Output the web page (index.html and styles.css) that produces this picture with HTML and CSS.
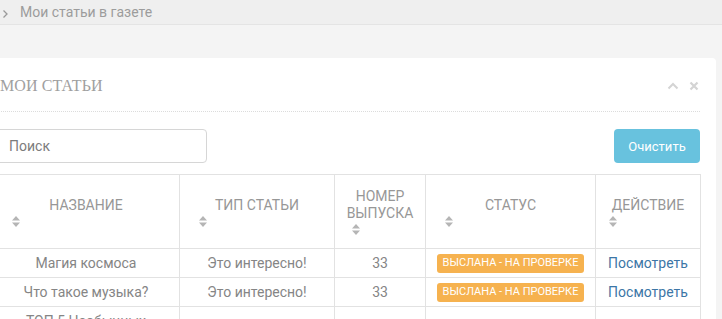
FILE: index.html
```html
<!DOCTYPE html>
<html lang="ru">
<head>
<meta charset="utf-8">
<link rel="stylesheet" href="styles.css">
</head>
<body>
<div class="crumbs">
  <svg class="crumb-arrow" width="7" height="10" viewBox="0 0 7 10"><path d="M1.5 1.5 L5 5 L1.5 8.5" fill="none" stroke="#999" stroke-width="1.3"/></svg>
  <span>Мои статьи в газете</span>
</div>
<div class="page">
  <div class="panel">
    <div class="panel-head">
      <h2 class="panel-title">МОИ СТАТЬИ</h2>
      <div class="panel-tools">
        <svg width="12" height="8" viewBox="0 0 12 8"><path d="M1.5 6.5 L6 2 L10.5 6.5" fill="none" stroke="#d4d4d4" stroke-width="2"/></svg>
        <svg width="10" height="10" viewBox="0 0 10 10"><path d="M1.5 1.5 L8.5 8.5 M8.5 1.5 L1.5 8.5" fill="none" stroke="#d4d4d4" stroke-width="2.2"/></svg>
      </div>
    </div>
    <div class="panel-body">
      <div class="toolbar">
        <input class="search" type="text" placeholder="Поиск">
        <button class="btn-clear">Очистить</button>
      </div>
      <table class="grid">
        <colgroup>
          <col class="c1"><col class="c2"><col class="c3"><col class="c4"><col class="c5">
        </colgroup>
        <thead>
          <tr>
            <th><div class="th-text">НАЗВАНИЕ</div><div class="sort"><svg width="8" height="11" viewBox="0 0 8 11"><path d="M4 0 L8 4.5 L0 4.5 Z M0 6.5 L8 6.5 L4 11 Z" fill="#b5b5b5"/></svg></div></th>
            <th><div class="th-text">ТИП СТАТЬИ</div><div class="sort"><svg width="8" height="11" viewBox="0 0 8 11"><path d="M4 0 L8 4.5 L0 4.5 Z M0 6.5 L8 6.5 L4 11 Z" fill="#b5b5b5"/></svg></div></th>
            <th><div class="th-text">НОМЕР<br>ВЫПУСКА</div><div class="sort sort-num"><svg width="8" height="11" viewBox="0 0 8 11"><path d="M4 0 L8 4.5 L0 4.5 Z M0 6.5 L8 6.5 L4 11 Z" fill="#b5b5b5"/></svg></div></th>
            <th><div class="th-text">СТАТУС</div><div class="sort"><svg width="8" height="11" viewBox="0 0 8 11"><path d="M4 0 L8 4.5 L0 4.5 Z M0 6.5 L8 6.5 L4 11 Z" fill="#b5b5b5"/></svg></div></th>
            <th><div class="th-text">ДЕЙСТВИЕ</div><div class="sort sort-act"><svg width="8" height="11" viewBox="0 0 8 11"><path d="M4 0 L8 4.5 L0 4.5 Z M0 6.5 L8 6.5 L4 11 Z" fill="#b5b5b5"/></svg></div></th>
          </tr>
        </thead>
        <tbody>
          <tr>
            <td>Магия космоса</td>
            <td>Это интересно!</td>
            <td>33</td>
            <td><span class="badge">ВЫСЛАНА - НА ПРОВЕРКЕ</span></td>
            <td><a class="link" href="#">Посмотреть</a></td>
          </tr>
          <tr>
            <td>Что такое музыка?</td>
            <td>Это интересно!</td>
            <td>33</td>
            <td><span class="badge">ВЫСЛАНА - НА ПРОВЕРКЕ</span></td>
            <td><a class="link" href="#">Посмотреть</a></td>
          </tr>
          <tr>
            <td>ТОП 5 Необычных</td>
            <td></td>
            <td></td>
            <td></td>
            <td></td>
          </tr>
        </tbody>
      </table>
    </div>
  </div>
</div>
</body>
</html>
```

FILE: styles.css
```css
* { box-sizing: border-box; }
html, body {
  margin: 0;
  padding: 0;
  background: #f4f4f4;
  font-family: Roboto, "Noto Sans", sans-serif;
  overflow: hidden;
  height: 319px;
}
.crumbs {
  height: 25px;
  background: #efefef;
  border-bottom: 1px solid #e4e4e4;
  display: flex;
  align-items: center;
  padding-left: 2px;
  gap: 11px;
  color: #9c9c9c;
  font-size: 14px;
}
.crumb-arrow { flex: none; margin-top: 3px; }
.page {
  padding-top: 33px;
  padding-right: 6px;
}
.panel {
  margin-left: -30px;
  background: #fff;
  border-radius: 4px;
  padding: 0 16px 0 22px;
}
.panel-head {
  height: 54px;
  border-bottom: 1px dotted #dcdcdc;
  display: flex;
  align-items: center;
  justify-content: space-between;
  padding-left: 8px;
  padding-top: 2px;
}
.panel-title {
  margin: 0;
  font-family: "Liberation Serif", "DejaVu Serif", serif;
  font-weight: normal;
  font-size: 16px;
  color: #a0a0a0;
  letter-spacing: 0.1px;
}
.panel-tools {
  display: flex;
  align-items: center;
  gap: 10px;
  margin-right: 1px;
}
.panel-body {
  padding-top: 17px;
}
.toolbar {
  display: flex;
  justify-content: space-between;
  align-items: center;
  margin-bottom: 11px;
}
.search {
  width: 218px;
  height: 34px;
  margin-left: -3px;
  border: 1px solid #d6d6d6;
  border-radius: 4px;
  padding: 0 12px 0 19px;
  font-family: Roboto, sans-serif;
  font-size: 14px;
  color: #555;
}
.search::placeholder { color: #7c7c7c; }
.btn-clear {
  width: 86px;
  height: 34px;
  border: none;
  border-radius: 4px;
  background: #68c2de;
  color: #fff;
  font-family: Roboto, sans-serif;
  font-size: 13px;
}
.grid {
  border-collapse: collapse;
  table-layout: fixed;
  width: 708px;
  color: #858585;
  font-size: 14px;
}
.c1 { width: 187px; }
.c2 { width: 155px; }
.c3 { width: 91px; }
.c4 { width: 170px; }
.c5 { width: 105px; }
.grid th, .grid td {
  border: 1px solid #e2e2e2;
}
.grid th {
  height: 74px;
  font-weight: normal;
  color: #979797;
  text-align: center;
  vertical-align: middle;
  padding: 0 4px;
  font-size: 14px;
}
.th-text { line-height: 17px; }
.sort {
  text-align: left;
  padding-left: 15px;
  height: 13px;
  line-height: 0;
  padding-top: 2px;
}
.sort.sort-num { padding-left: 13px; }
.sort.sort-act { padding-left: 9px; }
.grid td {
  height: 29px;
  text-align: center;
  padding: 0 4px;
  white-space: nowrap;
}
.badge {
  display: inline-block;
  background: #f6b24f;
  color: #fff;
  font-size: 11px;
  line-height: 14px;
  padding: 2px 6px 3px;
  border-radius: 3px;
}
.link {
  color: #3c76a6;
  text-decoration: none;
  font-size: 14px;
}
```
